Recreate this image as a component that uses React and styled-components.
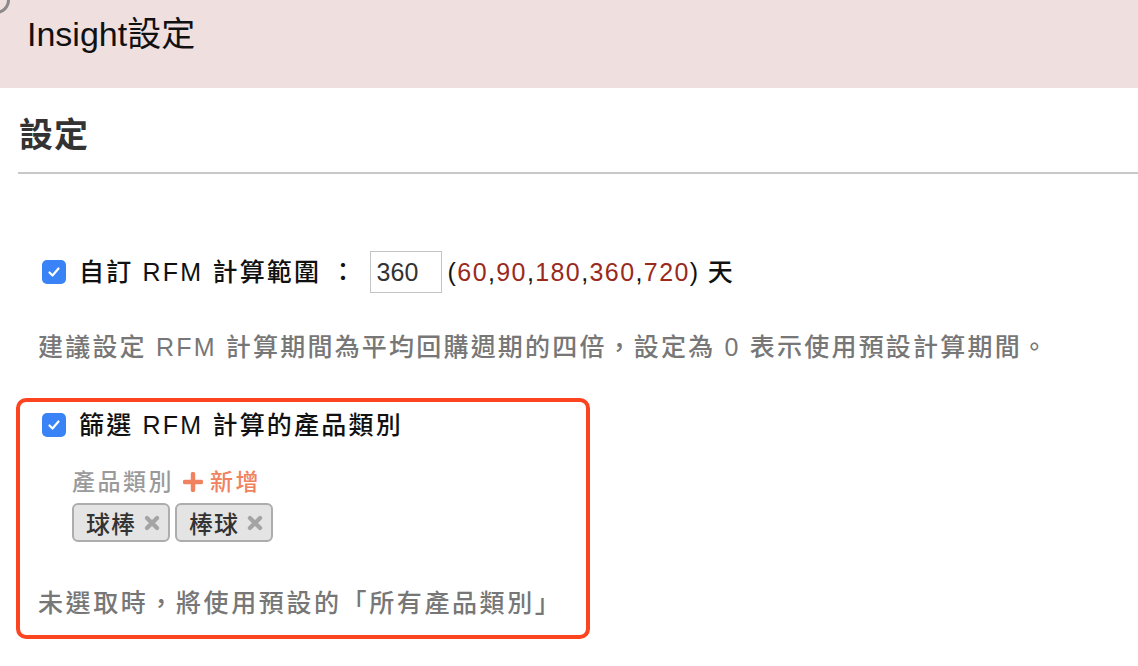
import React from 'react';
import styled, { createGlobalStyle } from 'styled-components';

const GlobalStyle = createGlobalStyle`
    html, body {
        margin: 0;
        padding: 0;
        background: #fff;
        font-family: "Liberation Sans", "Noto Sans CJK TC", sans-serif;
        overflow: hidden;
    }
`

const Page = styled.div`
    width: 1138px;
    height: 666px;
    position: relative;
    overflow: hidden;
`

const Header = styled.header`
    position: relative;
    height: 88px;
    box-sizing: border-box;
    padding: 13px 0 0 27px;
    background: #efdfdf;
    color: #111;
    font-size: 34px;
    line-height: 42px;
`

// corner of a rounded button cut off by the window edge
const CornerKnob = styled.span`
    position: absolute;
    left: -24px;
    top: -24px;
    width: 28px;
    height: 32px;
    border: 3px solid #8a8a8a;
    border-radius: 14px;
`

const Main = styled.main`
    padding-left: 16px;
`

const Heading = styled.h2`
    margin: 0 0 0 3px;
    padding: 26px 0 16px;
    font-size: 34px;
    line-height: 42px;
    font-weight: 700;
    color: #333;
    letter-spacing: 1px;
`

const Rule = styled.div`
    margin-left: 2px;
    height: 2px;
    background: #c8c8c8;
`

const Row = styled.div`
    display: flex;
    align-items: center;
    gap: 13px;
    padding-left: ${p => p.$indent || 0}px;
    margin-top: ${p => p.$top || 0}px;
    font-size: 25px;
    letter-spacing: 2.2px;
    color: #111;
    line-height: 32px;
    font-weight: 500;
`

const Check = styled.span`
    flex: none;
    width: 24px;
    height: 24px;
    border-radius: 5px;
    background: #3a83f6;
    display: flex;
    align-items: center;
    justify-content: center;
`

const Label = styled.span`
    display: flex;
    align-items: center;
    white-space: nowrap;
`

const NumInput = styled.span`
    display: inline-flex;
    align-items: center;
    box-sizing: border-box;
    width: 72px;
    height: 42px;
    margin: 0 6px 0 12px;
    padding-left: 6px;
    border: 1px solid #c4c4c4;
    color: #333;
    letter-spacing: 0;
    font-weight: 400;
`

const Range = styled.span`
    letter-spacing: 1.4px;
`

const Preset = styled.span`
    color: #992a1c;
`

const Note = styled.p`
    margin: ${p => p.$top || 0}px 0 0;
    padding-left: ${p => p.$indent || 0}px;
    font-size: 25px;
    letter-spacing: ${p => p.$spacing || 2.2}px;
    line-height: 36px;
    color: #777;
    font-weight: 500;
    white-space: nowrap;
`

const FilterBox = styled.section`
    margin-top: 33px;
    width: 574px;
    box-sizing: border-box;
    padding: 7px 0 14px;
    border: 4px solid #fd4420;
    border-radius: 10px;
`

const Category = styled.div`
    margin-top: 26px;
    padding-left: 52px;
`

const CategoryHead = styled.div`
    display: flex;
    align-items: center;
    gap: 9px;
    font-size: 23px;
    line-height: 30px;
    letter-spacing: 2.5px;
    font-weight: 500;
    color: #9a9a9a;
`

const AddLink = styled.span`
    display: flex;
    align-items: center;
    gap: 7px;
    color: #f0825f;
`

const Tags = styled.div`
    display: flex;
    gap: 5px;
    margin-top: 6px;
`

const Tag = styled.span`
    display: inline-flex;
    align-items: center;
    gap: 7px;
    box-sizing: border-box;
    height: 39px;
    padding: 0 7px 0 12px;
    background: #e4e4e4;
    border: 2px solid #adadad;
    border-radius: 6px;
    font-size: 24px;
    font-weight: 500;
    letter-spacing: 1px;
    color: #333;
`

const CheckMark = () => (
    <svg width="16" height="16" viewBox="0 0 16 16" fill="none">
        <path d="M3.5 8.5l3 3 6-7" stroke="#fff" strokeWidth="2.2" strokeLinecap="round" strokeLinejoin="round" />
    </svg>
)

const Cross = () => (
    <svg width="18" height="18" viewBox="0 0 16 16">
        <path d="M3.5 3.5l9 9M12.5 3.5l-9 9" stroke="#a4a4a4" strokeWidth="3.8" strokeLinecap="round" />
    </svg>
)

const Plus = () => (
    <svg width="20" height="20" viewBox="0 0 20 20">
        <path d="M10 2v16M2 10h16" stroke="#f0825f" strokeWidth="4.4" strokeLinecap="round" />
    </svg>
)

const presets = [60, 90, 180, 360, 720]
const tags = ['球棒', '棒球']

const App = () => {
    return (
        <Page>
            <GlobalStyle />
            <Header>
                <CornerKnob />
                Insight設定
            </Header>

            <Main>
                <Heading>設定</Heading>
                <Rule />

                <Row $indent={26} $top={77}>
                    <Check><CheckMark /></Check>
                    <Label>
                        自訂 RFM 計算範圍 ：
                        <NumInput>360</NumInput>
                        <Range>
                            ({presets.map((n, i) => (
                                <React.Fragment key={n}>
                                    {i > 0 && ','}
                                    <Preset>{n}</Preset>
                                </React.Fragment>
                            ))}) 天
                        </Range>
                    </Label>
                </Row>

                <Note $indent={22} $top={36}>
                    建議設定 RFM 計算期間為平均回購週期的四倍，設定為 0 表示使用預設計算期間。
                </Note>

                <FilterBox>
                    <Row $indent={22}>
                        <Check><CheckMark /></Check>
                        <Label>篩選 RFM 計算的產品類別</Label>
                    </Row>

                    <Category>
                        <CategoryHead>
                            產品類別
                            <AddLink><Plus />新增</AddLink>
                        </CategoryHead>
                        <Tags>
                            {tags.map(t => (
                                <Tag key={t}>{t}<Cross /></Tag>
                            ))}
                        </Tags>
                    </Category>

                    <Note $indent={18} $top={43} $spacing={2.6}>
                        未選取時，將使用預設的「所有產品類別」
                    </Note>
                </FilterBox>
            </Main>
        </Page>
    )
}

export default App
